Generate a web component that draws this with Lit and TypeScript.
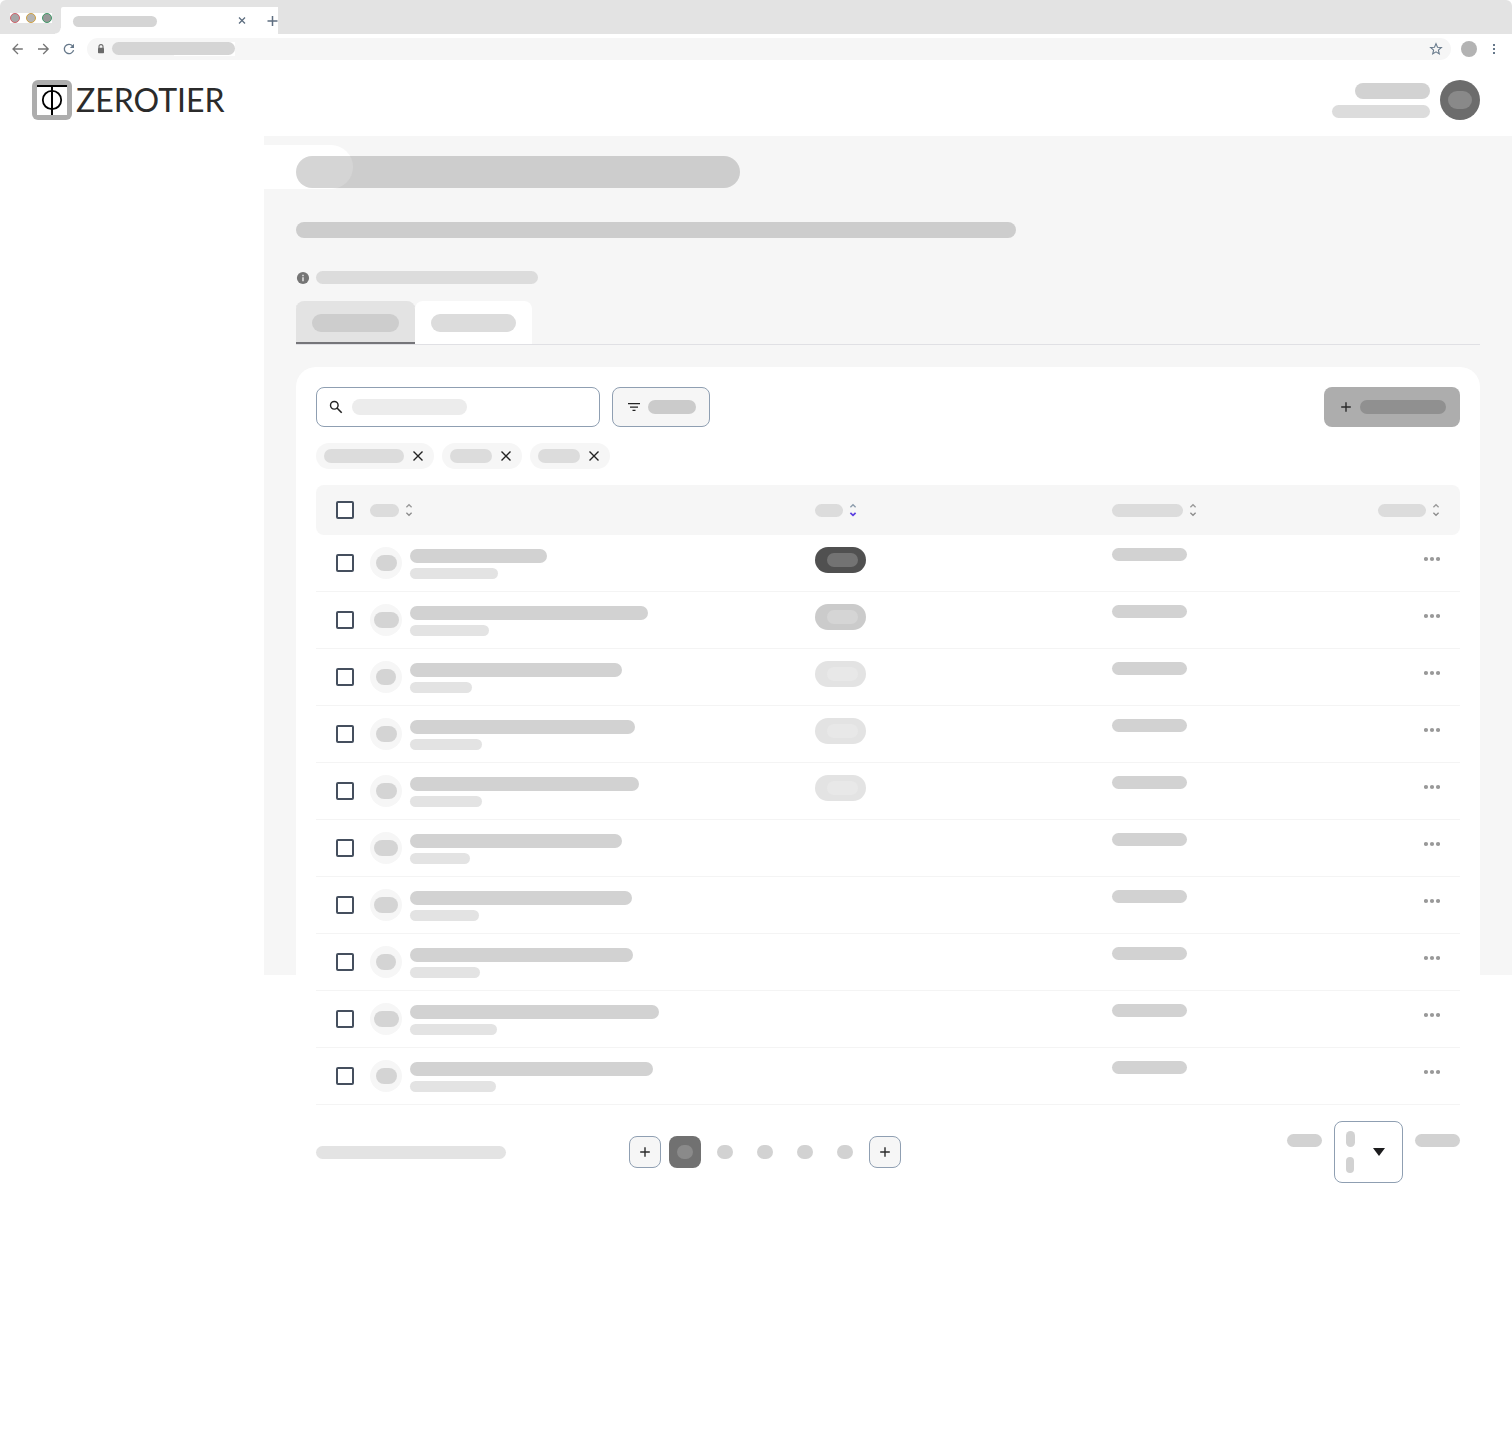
import { LitElement, html, css, svg, nothing } from "lit";
import { customElement, state } from "lit/decorators.js";
import { styleMap } from "lit/directives/style-map.js";
import { classMap } from "lit/directives/class-map.js";

interface Row {
  initials: number;
  name: number;
  detail: number;
  status?: "dark" | "mid" | "light";
}

const ROWS: Row[] = [
  { initials: 21, name: 137, detail: 88, status: "dark" },
  { initials: 25, name: 238, detail: 79, status: "mid" },
  { initials: 20, name: 212, detail: 62, status: "light" },
  { initials: 21, name: 225, detail: 72, status: "light" },
  { initials: 21, name: 229, detail: 72, status: "light" },
  { initials: 24, name: 212, detail: 60 },
  { initials: 24, name: 222, detail: 69 },
  { initials: 20, name: 223, detail: 70 },
  { initials: 25, name: 249, detail: 87 },
  { initials: 21, name: 243, detail: 86 },
];

const CHIPS = [80, 42, 42];
const TABS = [87, 85];
const COLUMNS = [
  { key: "name", label: 29 },
  { key: "status", label: 28 },
  { key: "date", label: 71 },
  { key: "actions", label: 48 },
];

/** A rounded placeholder bar; tone and height come from the class, width from data. */
const bar = (width: number, kind: string) =>
  html`<span class="bar ${kind}" style=${styleMap({ width: `${width}px` })}></span>`;

const plusIcon = html`<svg class="icon" width="16" height="16" viewBox="0 0 16 16" aria-hidden="true">
  <path d="M8 3.2v9.6M3.2 8h9.6" fill="none" stroke="#2b2b2b" stroke-width="1.4" />
</svg>`;

const closeIcon = html`<svg class="icon" width="16" height="16" viewBox="0 0 16 16" aria-hidden="true">
  <path d="M3.5 3.5l9 9M12.5 3.5l-9 9" fill="none" stroke="#222" stroke-width="1.4" />
</svg>`;

const sortIcon = (active: boolean) => html`<svg class="icon" width="8" height="14" viewBox="0 0 8 14" aria-hidden="true">
  <path d="M1.4 4.2L4 1.7l2.6 2.5" fill="none" stroke=${active ? "#8b9bab" : "#999"} stroke-width="1.3" />
  <path d="M1.4 9.8L4 12.3l2.6-2.5" fill="none" stroke=${active ? "#5b3fe0" : "#8c8c8c"} stroke-width=${active ? 1.7 : 1.3} />
</svg>`;

@customElement("browser-bar")
export class BrowserBar extends LitElement {
  static styles = css`
    :host { display: block; }
    .strip {
      display: flex; height: 34px; background: #e3e3e3;
      border-radius: 6px 6px 0 0;
    }
    .lights { display: flex; align-items: center; padding: 2px 9px 0 10px; }
    .lights svg { background: #fff; display: block; }
    .tab {
      display: flex; align-items: center; background: #fff; margin-top: 7px;
      width: 217px; box-sizing: border-box; padding-left: 12px;
      justify-content: space-between; position: relative; border-radius: 2px 0 0 0;
    }
    .tab::before {
      content: ""; position: absolute; left: -6px; bottom: 0; width: 6px; height: 6px;
      background: radial-gradient(circle at 0 0, #e3e3e3 5px, #fff 6px);
    }
    .bar { display: block; border-radius: 8px; background: #d5d5d5; }
    .title { width: 84px; height: 11px; margin-top: 2px; }
    .tools { display: flex; gap: 19px; align-items: center; }
    button, a { border: 0; padding: 0; margin: 0; background: none; display: block; line-height: 0; }
    .toolbar { display: flex; align-items: center; height: 30px; padding: 0 10px 0 9px; }
    .nav { display: flex; gap: 10px; }
    .address {
      flex: 1; display: flex; align-items: center; height: 22px; border-radius: 11px;
      background: #f6f6f6; margin: 0 10px; padding: 0 7px 0 9px; gap: 6px; position: relative;
    }
    .address input {
      position: absolute; inset: 0; border: 0; padding: 0 30px; background: none; outline: none;
      width: 100%; box-sizing: border-box; font: 12px "Inter", sans-serif;
    }
    .host { background: linear-gradient(90deg, #f6f6f6 50%, #fff 50%); margin-right: auto; padding-bottom: 1px; }
    .host .bar { width: 123px; height: 13px; }
    .star { position: relative; }
    .profile { width: 16px; height: 16px; border-radius: 50%; background: #b3b3b3; }
    .more { margin-left: 9px; }
  `;

  render() {
    return html`
      <div class="strip">
        <div class="lights">
          <svg width="42" height="10" viewBox="0 0 42 10" aria-hidden="true">
            <circle cx="5" cy="5" r="4.5" fill="#a6a6a6" stroke="#d0606a" />
            <circle cx="21" cy="5" r="4.5" fill="#b5b5b5" stroke="#cfa040" />
            <circle cx="37" cy="5" r="4.5" fill="#979797" stroke="#3f9a68" />
          </svg>
        </div>
        <div class="tab">
          <span class="bar title"></span>
          <span class="tools">
            <button aria-label="Close tab"><svg width="12" height="12" viewBox="0 0 12 12">
              <path d="M3 2.5l6 6M9 2.5l-6 6" stroke="#5e6e80" stroke-width="1.3" />
            </svg></button>
            <button aria-label="New tab"><svg width="11" height="12" viewBox="0 0 11 12">
              <path d="M5.5 1v10M.5 6h10" stroke="#5e6e80" stroke-width="1.5" />
            </svg></button>
          </span>
        </div>
      </div>
      <div class="toolbar">
        <div class="nav">
          <button aria-label="Back"><svg width="16" height="16" viewBox="0 0 16 16">
            <path d="M13.8 8H4.2M9 3L4 8l5 5" fill="none" stroke="#757575" stroke-width="1.3" />
          </svg></button>
          <button aria-label="Forward"><svg width="16" height="16" viewBox="0 0 16 16">
            <path d="M3 8h10M8.2 3l5 5-5 5" fill="none" stroke="#757575" stroke-width="1.3" />
          </svg></button>
          <button aria-label="Reload"><svg width="16" height="16" viewBox="0 0 16 16">
            <path d="M12.6 9.2A4.7 4.7 0 1 1 11.6 4.9" fill="none" stroke="#66788a" stroke-width="1.3" />
            <path d="M13 2.8v4.1H8.9z" fill="#66788a" />
          </svg></button>
        </div>
        <div class="address">
          <svg width="10" height="12" viewBox="0 0 10 12" aria-hidden="true">
            <path d="M3 5V3.6a2 2 0 0 1 4 0V5" fill="none" stroke="#6b6b6b" stroke-width="1.1" />
            <rect x="2" y="4.8" width="6" height="5.4" rx=".7" fill="#6b6b6b" />
          </svg>
          <span class="host"><span class="bar"></span></span>
          <input aria-label="Address" />
          <button class="star" aria-label="Bookmark"><svg width="16" height="16" viewBox="0 0 16 16">
            <path d="M8 2.6l1.5 3.6 3.9.3-3 2.6.9 3.8L8 10.9l-3.3 2 .9-3.8-3-2.6 3.9-.3z" fill="none" stroke="#66788a" stroke-width="1.1" />
          </svg></button>
        </div>
        <button class="profile" aria-label="Profile"></button>
        <button class="more" aria-label="Browser menu"><svg width="16" height="16" viewBox="0 0 16 16">
          <path d="M7 3h2v2H7zM7 7h2v2H7zM7 11h2v2H7z" fill="#66788a" />
        </svg></button>
      </div>
    `;
  }
}

@customElement("app-header")
export class AppHeader extends LitElement {
  static styles = css`
    :host { display: flex; justify-content: space-between; align-items: center; padding: 16px 32px; }
    .brand { display: flex; align-items: center; gap: 4px; text-decoration: none; color: #2b2b2b; }
    .brand svg { display: block; }
    .word { font: 400 32px/40px "Lato", "Open Sans", sans-serif; }
    .user { display: flex; align-items: center; gap: 10px; }
    .lines { display: flex; flex-direction: column; align-items: flex-end; gap: 6px; }
    .line { height: 13px; width: 98px; border-radius: 8px; background: #dcdcdc; }
    .line.name { height: 16px; width: 75px; background: #d2d2d2; }
    .avatar {
      width: 40px; height: 40px; border: 0; padding: 0; border-radius: 50%; background: #6c6c6c;
      display: grid; place-items: center;
    }
    .avatar span { width: 24px; height: 18px; border-radius: 9px; background: #898989; }
  `;

  render() {
    return html`
      <a class="brand" href="#">
        <svg width="40" height="40" viewBox="0 0 40 40" aria-hidden="true">
          <rect width="40" height="40" rx="6" fill="#adadad" />
          <rect x="5" y="5" width="30" height="30" fill="#fff" />
          <path d="M5 6h30M20 6v29" stroke="#000" stroke-width="2" />
          <circle cx="20" cy="20" r="9.2" fill="none" stroke="#000" stroke-width="1.8" />
        </svg>
        <span class="word">ZEROTIER</span>
      </a>
      <div class="user">
        <div class="lines"><span class="line name"></span><span class="line"></span></div>
        <button class="avatar" aria-label="Account"><span></span></button>
      </div>
    `;
  }
}

@customElement("app-root")
export class AppRoot extends LitElement {
  @state() private tab = 0;
  @state() private page = 0;
  @state() private sorted = "status";

  static styles = css`
    :host { display: block; background: #fff; }
    button { border: 0; margin: 0; padding: 0; background: none; font: inherit; }
    .icon { display: block; flex: none; }
    .body { display: grid; grid-template-columns: 264px minmax(0, 1fr); }
    main {
      padding: 20px 32px; position: relative;
      background: linear-gradient(#f6f6f6, #f6f6f6) no-repeat 0 0 / 100% 839px;
    }
    main::before {
      content: ""; position: absolute; left: 0; top: 9px; width: 89px; height: 44px;
      background: #fff; border-radius: 0 22px 22px 0;
    }
    .bar { display: block; flex: none; max-width: 100%; height: 13px; border-radius: 8px; background: #dcdcdc; }
    .bar.title { position: relative; height: 32px; border-radius: 16px; background: rgba(0, 0, 0, 0.165); }
    .bar.subtitle { height: 16px; margin-top: 34px; background: #cdcdcd; }
    .bar.tab-label { height: 18px; border-radius: 9px; }
    .bar.hint { height: 16px; background: #ececec; }
    .bar.filter-label { height: 14px; background: #cbcbcb; }
    .bar.add-label { height: 14px; background: #909090; }
    .bar.chip-label { height: 14px; }
    .bar.initials { height: 16px; background: #d4d4d4; }
    .bar.name { height: 14px; background: #d2d2d2; }
    .bar.detail { height: 11px; background: #e3e3e3; }
    .bar.total { background: #e3e3e3; }
    .bar.value { background: #d2d2d2; }
    .bar.number { height: 14px; background: #d2d2d2; }
    .bar.digit { height: 16px; background: #d2d2d2; }

    .note { display: flex; align-items: center; gap: 6px; margin-top: 33px; height: 13px; }
    .tabs { display: flex; margin-top: 17px; border-bottom: 1px solid #e0e0e4; }
    .tab {
      height: 43px; padding: 0 16px; background: #fff; border-radius: 8px 8px 0 0;
      display: flex; align-items: center; box-sizing: border-box;
    }
    .tab.on { background: #e3e3e3; box-shadow: inset 0 -2px 0 #757579; }
    .tab.on .bar { background: #cdcdcd; }

    .card { background: #fff; border-radius: 20px; margin-top: 22px; padding: 20px; }
    .controls { display: flex; gap: 12px; }
    .search {
      position: relative; width: 284px; height: 40px; box-sizing: border-box;
      border: 1px solid #8f9fb2; border-radius: 8px; display: flex; align-items: center;
      gap: 8px; padding: 0 11px;
    }
    .search input {
      position: absolute; inset: 0; width: 100%; box-sizing: border-box; border: 0; outline: none;
      background: none; padding: 0 12px 0 35px; font: 14px "Inter", sans-serif;
    }
    .filter, .add { height: 40px; box-sizing: border-box; border-radius: 8px; display: flex; align-items: center; gap: 6px; }
    .filter { border: 1px solid #8f9fb2; background: #f6f6f6; padding: 0 13px; }
    .add { background: #adadad; padding: 0 14px; margin-left: auto; }
    .chips { display: flex; gap: 8px; margin: 16px 0; }
    .chip { display: flex; align-items: center; gap: 6px; height: 26px; border-radius: 13px; background: #f6f6f6; padding: 0 8px; }

    table { width: 100%; table-layout: fixed; border-collapse: separate; border-spacing: 0; }
    .c-check { width: 54px; }
    .c-status { width: 297px; }
    .c-date { width: 200px; }
    .c-actions { width: 148px; }
    th { height: 50px; padding: 0; background: #f6f6f6; vertical-align: middle; }
    th:first-child { border-radius: 8px 0 0 8px; }
    th:last-child { border-radius: 0 8px 8px 0; }
    td { height: 57px; padding: 12px 0; box-sizing: border-box; border-bottom: 1px solid #f4f4f4; vertical-align: top; }
    .check { padding: 0 0 0 20px; vertical-align: middle; }
    input[type="checkbox"] {
      appearance: none; display: block; width: 18px; height: 18px; margin: 0;
      border: 2px solid #454f5e; border-radius: 2px; background: #fff;
    }
    input[type="checkbox"]:checked { background: #454f5e; }
    .sort { display: flex; align-items: center; gap: 6px; }
    .end { padding-right: 20px; }
    .end > button { margin-left: auto; }
    .person { display: flex; gap: 8px; height: 32px; }
    .avatar { width: 32px; height: 32px; flex: none; border-radius: 50%; background: #f6f6f6; display: grid; place-items: center; }
    .text { display: flex; flex-direction: column; gap: 5px; padding-top: 2px; min-width: 0; }
    .status {
      display: flex; align-items: center; justify-content: flex-end; width: 51px; height: 26px;
      box-sizing: border-box; padding-right: 8px; border-radius: 13px;
    }
    .status .bar { height: 14px; }
    .status.dark { background: #505050; }
    .status.dark .bar { background: #737373; }
    .status.mid { background: #cbcbcb; }
    .status.mid .bar { background: #d5d5d5; }
    .status.light { background: #e3e3e3; }
    .status.light .bar { background: #e8e8e8; }
    .date { padding-top: 13px; }
    .menu { display: block; width: 16px; height: 24px; }

    .footer { display: grid; grid-template-columns: 313px 1fr auto; align-items: center; margin-top: 16px; }
    .pages { display: flex; gap: 8px; }
    .page { width: 32px; height: 32px; box-sizing: border-box; border-radius: 8px; display: grid; place-items: center; }
    .page.step { border: 1px solid #8f9fb2; background: #f6f6f6; }
    .page.on { background: #717171; }
    .page.on .bar { background: #8a8a8a; }
    .size { display: flex; gap: 12px; }
    .size > .bar { margin-top: 13px; }
    .picker {
      position: relative; width: 69px; height: 62px; box-sizing: border-box; border: 1px solid #8f9fb2;
      border-radius: 8px; padding: 0 17px 0 11px; display: flex; align-items: center; justify-content: space-between;
    }
    .picker select { position: absolute; inset: 0; width: 100%; height: 100%; appearance: none; border: 0; background: none; }
    .digits { display: flex; flex-direction: column; gap: 10px; }
  `;

  private renderRow(row: Row) {
    return html`<tr>
      <td class="check"><input type="checkbox" aria-label="Select row" /></td>
      <td>
        <div class="person">
          <span class="avatar">${bar(row.initials, "initials")}</span>
          <span class="text">${bar(row.name, "name")}${bar(row.detail, "detail")}</span>
        </div>
      </td>
      <td>${row.status ? html`<span class="status ${row.status}">${bar(31, "")}</span>` : nothing}</td>
      <td class="date">${bar(75, "value")}</td>
      <td class="end">
        <button class="menu" aria-label="Row actions">
          <svg class="icon" width="16" height="24" viewBox="0 0 16 24" aria-hidden="true">
            ${[2, 8, 14].map((x) => svg`<circle cx=${x} cy="12" r="2.1" fill="#999" />`)}
          </svg>
        </button>
      </td>
    </tr>`;
  }

  render() {
    return html`
      <browser-bar></browser-bar>
      <app-header></app-header>
      <div class="body">
        <nav aria-label="Sections"></nav>
        <main>
          ${bar(444, "title")} ${bar(720, "subtitle")}
          <div class="note">
            <svg class="icon" width="14" height="14" viewBox="0 0 14 14" aria-hidden="true">
              <circle cx="7" cy="7" r="6.1" fill="#757575" />
              <path d="M6.1 3.7h1.8v1.5H6.1zM6.1 6.2h1.8v4H6.1z" fill="#d2d2d2" />
            </svg>
            ${bar(222, "")}
          </div>
          <div class="tabs" role="tablist">
            ${TABS.map((width, i) => html`<button
              role="tab"
              aria-label="Tab ${i + 1}"
              aria-selected=${this.tab === i}
              class=${classMap({ tab: true, on: this.tab === i })}
              @click=${() => (this.tab = i)}
            >${bar(width, "tab-label")}</button>`)}
          </div>

          <section class="card">
            <div class="controls">
              <div class="search">
                <svg class="icon" width="16" height="16" viewBox="0 0 16 16" aria-hidden="true">
                  <circle cx="6.3" cy="6.3" r="3.8" fill="none" stroke="#222" stroke-width="1.4" />
                  <path d="M9 9l4.7 4.7" stroke="#222" stroke-width="1.6" />
                </svg>
                ${bar(115, "hint")}
                <input type="search" aria-label="Search" />
              </div>
              <button class="filter" aria-label="Filter">
                <svg class="icon" width="16" height="16" viewBox="0 0 16 16" aria-hidden="true">
                  <path d="M2 4h12v1.3H2zM4 7.4h8v1.3H4zM6.5 10.7h3V12h-3z" fill="#222" />
                </svg>
                ${bar(48, "filter-label")}
              </button>
              <button class="add" aria-label="Add">${plusIcon}${bar(86, "add-label")}</button>
            </div>
            <div class="chips">
              ${CHIPS.map((width) => html`<span class="chip">
                ${bar(width, "chip-label")}<button aria-label="Remove filter">${closeIcon}</button>
              </span>`)}
            </div>
            <table>
              <colgroup>
                <col class="c-check" /><col /><col class="c-status" /><col class="c-date" /><col class="c-actions" />
              </colgroup>
              <thead>
                <tr>
                  <th class="check"><input type="checkbox" aria-label="Select all rows" /></th>
                  ${COLUMNS.map((column) => html`<th class=${column.key === "actions" ? "end" : ""}>
                    <button class="sort" aria-label="Sort by ${column.key}" @click=${() => (this.sorted = column.key)}>
                      ${bar(column.label, "")}${sortIcon(this.sorted === column.key)}
                    </button>
                  </th>`)}
                </tr>
              </thead>
              <tbody>${ROWS.map((row) => this.renderRow(row))}</tbody>
            </table>
            <div class="footer">
              ${bar(190, "total")}
              <div class="pages">
                <button class="page step" aria-label="Previous page">${plusIcon}</button>
                ${[0, 1, 2, 3, 4].map((i) => html`<button
                  class=${classMap({ page: true, on: this.page === i })}
                  aria-label="Page ${i + 1}"
                  @click=${() => (this.page = i)}
                >${bar(16, "number")}</button>`)}
                <button class="page step" aria-label="Next page">${plusIcon}</button>
              </div>
              <div class="size">
                ${bar(35, "value")}
                <div class="picker">
                  <span class="digits">${bar(9, "digit")}${bar(8, "digit")}</span>
                  <svg class="icon" width="12" height="8" viewBox="0 0 12 8" aria-hidden="true">
                    <path d="M0 0h12L6 8z" fill="#1c1c1e" />
                  </svg>
                  <select aria-label="Rows per page"><option value="10"></option></select>
                </div>
                ${bar(45, "value")}
              </div>
            </div>
          </section>
        </main>
      </div>
    `;
  }
}
